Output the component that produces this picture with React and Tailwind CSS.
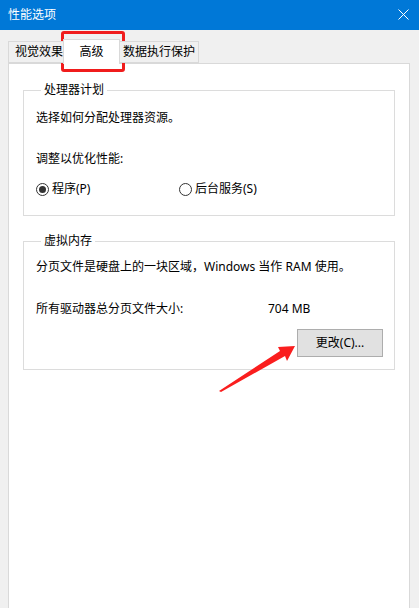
import React from 'react';

// 性能选项 → 高级 tab, with the red annotation marks drawn on top

const FONT = { fontFamily: '"Noto Sans", "Noto Sans CJK SC", sans-serif' };

function Radio({ checked, label }) {
  return (
    <label className="flex items-center gap-[3px] h-4">
      <span className="w-[13px] h-[13px] rounded-full border border-[#333] bg-white flex items-center justify-center">
        {checked && <span className="w-[7px] h-[7px] rounded-full bg-[#333]" />}
      </span>
      <span>{label}</span>
    </label>
  );
}

function Group({ title, className = '', children }) {
  return (
    <fieldset className={`border border-[#dcdcdc] ${className}`}>
      <legend className="ml-[5px] px-[3px] leading-4">{title}</legend>
      {children}
    </fieldset>
  );
}

export default function App() {
  return (
    <div className="relative w-[419px] h-[608px] overflow-hidden bg-[#f0f0f0] text-[12px] text-black flex flex-col" style={FONT}>
      {/* 标题栏 */}
      <div className="h-[30px] shrink-0 bg-[#0078d7] text-white flex items-center justify-between pl-2 pr-[10px]">
        <span className="text-[12px] leading-4">性能选项</span>
        <svg width="11" height="11" viewBox="0 0 11 11" className="mt-[-1px]">
          <path d="M0.5 0.5 L10.5 10.5 M10.5 0.5 L0.5 10.5" stroke="#fff" strokeWidth="1" fill="none" />
        </svg>
      </div>

      <div className="flex-1 flex flex-col pl-2 pr-[9px] pt-[9px]">
        {/* 选项卡 */}
        <div className="relative z-10 flex items-end h-[25px] -mb-px">
          <div className="w-[55px] h-[22px] mb-px border border-r-0 border-[#d9d9d9] bg-[#f0f0f0] flex items-center pl-[6px] leading-4">
            视觉效果
          </div>
          <div className="w-[57px] h-[25px] border border-b-0 border-[#d9d9d9] bg-white flex items-start justify-center pt-[3px] leading-4">
            <span className="mt-[1px]">高级</span>
          </div>
          <div className="w-[79px] h-[22px] mb-px border border-l-0 border-[#d9d9d9] bg-[#f0f0f0] flex items-center pl-[3px] leading-4">
            数据执行保护
          </div>
        </div>

        {/* 面板 */}
        <div className="h-[560px] shrink-0 border border-b-0 border-[#d9d9d9] bg-white px-[14px] pt-[18px]">
          <Group title="处理器计划" className="pl-3 pb-[18px]">
            <p className="mt-3 leading-4">选择如何分配处理器资源。</p>
            <p className="mt-[25px] leading-4">调整以优化性能:</p>
            <div className="mt-[14px] flex items-center">
              <div className="w-[143px]">
                <Radio checked label="程序(P)" />
              </div>
              <Radio label="后台服务(S)" />
            </div>
          </Group>

          <Group title="虚拟内存" className="mt-[17px] pl-3 pr-[11px] pb-3">
            <p className="mt-[10px] leading-4">分页文件是硬盘上的一块区域，Windows 当作 RAM 使用。</p>
            <div className="mt-[26px] flex leading-4">
              <span className="w-[232px]">所有驱动器总分页文件大小:</span>
              <span>704 MB</span>
            </div>
            <div className="mt-3 flex justify-end">
              <button className="w-[86px] h-[28px] border border-[#adadad] bg-[#e1e1e1] leading-4">
                更改(C)...
              </button>
            </div>
          </Group>
        </div>
      </div>

      {/* 红色标注 */}
      <div className="absolute left-[61px] top-[31px] w-[64px] h-[41px] border-[3px] border-[#f01c1c] rounded-[3px] pointer-events-none" />
      <svg className="absolute left-0 top-0 pointer-events-none" width="419" height="608">
        <polygon points="219,391 280,351 278,347 295,346 287,361 285,356 221,392" fill="#fa1e1e" />
      </svg>
    </div>
  );
}
